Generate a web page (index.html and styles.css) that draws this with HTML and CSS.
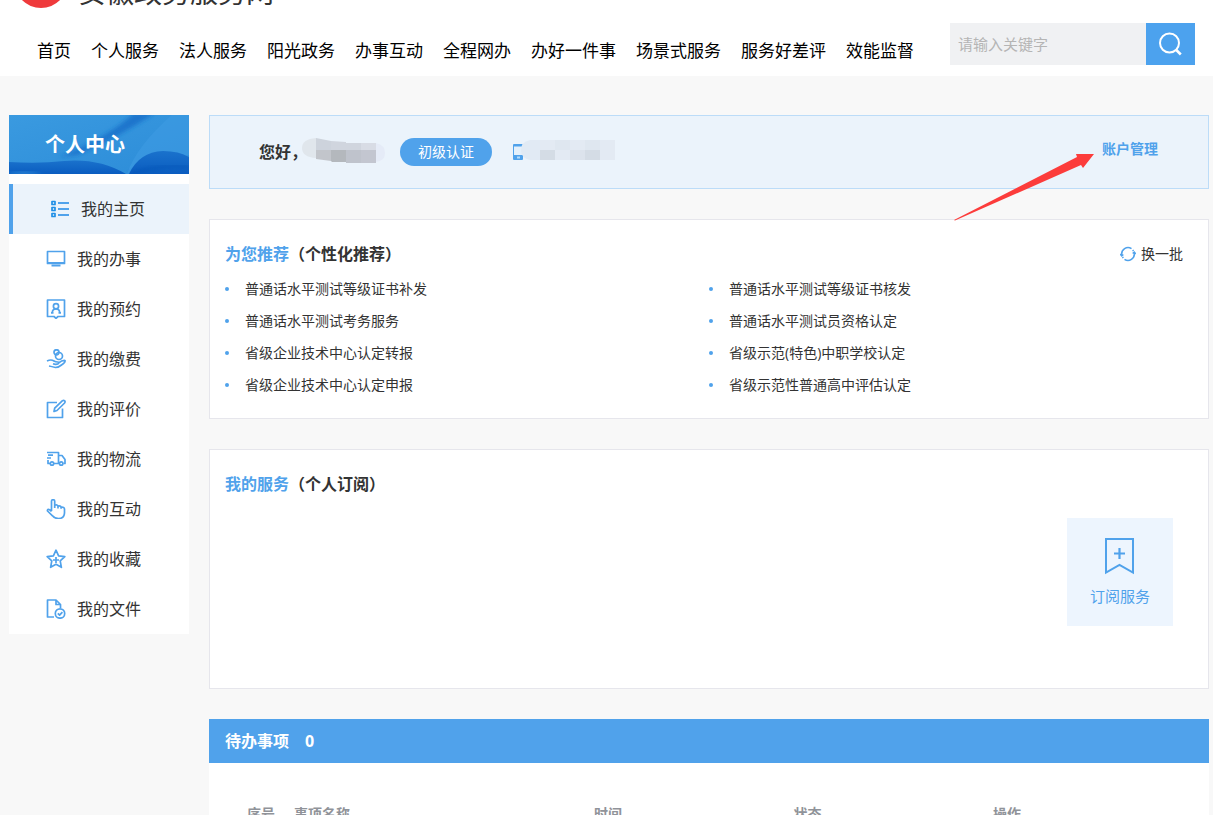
FILE: index.html
```html
<!DOCTYPE html>
<html lang="zh-CN">
<head>
<meta charset="utf-8">
<meta name="viewport" content="width=device-width, initial-scale=1">
<title>个人中心</title>
<link rel="stylesheet" href="styles.css">
</head>
<body>
<header class="header">
  <div class="brand">
    <span class="brand-emblem"></span>
    <span class="brand-name">安徽政务服务网</span>
  </div>
  <div class="header-row">
    <nav class="nav">
      <a href="#">首页</a>
      <a href="#">个人服务</a>
      <a href="#">法人服务</a>
      <a href="#">阳光政务</a>
      <a href="#">办事互动</a>
      <a href="#">全程网办</a>
      <a href="#">办好一件事</a>
      <a href="#">场景式服务</a>
      <a href="#">服务好差评</a>
      <a href="#">效能监督</a>
    </nav>
    <form class="search">
      <input class="search-input" type="text" placeholder="请输入关键字" aria-label="请输入关键字">
      <button class="search-button" type="button" aria-label="搜索">
        <svg width="24" height="24" viewBox="0 0 24 24" fill="none" stroke="#fff" stroke-width="2"><circle cx="10.500" cy="11" r="9.500"/><path d="M16.800 17.500l5 5" stroke-width="2.600"/></svg>
      </button>
    </form>
  </div>
</header>

<div class="layout">
  <aside class="sidebar">
    <div class="banner">
      <svg class="banner-art" viewBox="0 0 180 59" preserveAspectRatio="none" aria-hidden="true">
        <defs>
          <linearGradient id="sky" x1="0" y1="0" x2="1" y2="1"><stop offset="0" stop-color="#3a9ae0"/><stop offset="1" stop-color="#2c8cd8"/></linearGradient>
          <linearGradient id="deep" x1="0" y1="0" x2="0" y2="1"><stop offset="0" stop-color="#1a72cc"/><stop offset="1" stop-color="#0a5cc0"/></linearGradient>
          <filter id="soft"><feGaussianBlur stdDeviation="2"/></filter>
        </defs>
        <rect width="180" height="59" fill="url(#sky)"/>
        <path d="M50 42Q100 22 125 -2H146Q110 22 68 40Z" fill="#1a74cc" filter="url(#soft)"/>
        <path d="M118 59Q128 30 165 -2H180V40Z" fill="#3d9be2" opacity=".6"/>
        <path d="M0 47Q30 49 55 46Q90 43 117 59H0Z" fill="url(#deep)"/>
        <path d="M-4 60Q14 54 34 60Z" fill="#3391dc" filter="url(#soft)"/>
        <path d="M120 59Q130 37 154 36Q170 36 180 42V59Z" fill="url(#deep)"/>
        <path d="M122 59Q150 49 180 52" fill="none" stroke="#0b52b5" stroke-width="2" filter="url(#soft)"/>
      </svg>
      <h1 class="banner-title">个人中心</h1>
    </div>
    <nav class="menu">
      <a class="menu-item menu-item-active" href="#">
        <svg class="menu-icon" viewBox="0 0 20 20"><path d="M2 2.500h3v3H2zM2 8.500h3v3H2zM2 14.500h3v3H2z" stroke="#1f8fe6"/><path d="M8 4h11M8 10h11M8 16h11" stroke-width="2"/></svg>
        我的主页</a>
      <a class="menu-item" href="#">
        <svg class="menu-icon" viewBox="0 0 20 20"><path d="M1.500 2.500h17v12h-17z"/><path d="M1.500 14h17M5.500 16.500h9" stroke-width="2"/></svg>
        我的办事</a>
      <a class="menu-item" href="#">
        <svg class="menu-icon" viewBox="0 0 20 20"><path d="M1.500 1h17v16.500H12l-2 1.800-2-1.800H1.500z"/><circle cx="10" cy="7.200" r="2.600"/><path d="M6.200 14q.2-4.200 3.800-4.200t3.800 4.200M5 13.800h2.500M12.500 13.800H15"/></svg>
        我的预约</a>
      <a class="menu-item" href="#">
        <svg class="menu-icon" viewBox="0 0 20 20"><circle cx="10.500" cy="3.300" r="2.500"/><circle cx="13" cy="7" r="3.500"/><path d="M1 12q4-2 7 0 1.500 1 4 1 1.500 1.500-1 2.200-2 .4-4-.4M12.500 14q4-3 6.500-2.500.5 2-3.500 4.500-3 2.500-6 2.500-4-1-6.500-1.500"/></svg>
        我的缴费</a>
      <a class="menu-item" href="#">
        <svg class="menu-icon" viewBox="0 0 20 20"><path d="M11 3.500H1.500v15h15V9.500"/><path d="M8 12.500l.7-3.300 7.800-7.500q1.200-.8 2.200.2.800 1-.1 2.100L11 11.500z"/></svg>
        我的评价</a>
      <a class="menu-item" href="#">
        <svg class="menu-icon" viewBox="0 0 20 20"><path d="M1 3.500h11.500v11M2 6.200h5M1 9h4M2 11v3.500h2M8 14.500h5M12.500 6.500h3.500l3 4v4h-1.500"/><circle cx="6" cy="14.500" r="1.700"/><circle cx="15.200" cy="14.500" r="1.700"/></svg>
        我的物流</a>
      <a class="menu-item" href="#">
        <svg class="menu-icon" viewBox="0 0 20 20"><path d="M5.500 12V2.200q0-1.500 1.600-1.500t1.600 1.500V9M8.700 6.200q2.800-1 3.300 1V9.500M12 7q2.700-.6 3.100 1.200v1.600M15.100 8.200q3.300-.4 3.400 1.800v4q-.3 5.500-6 5.500-4 0-6-2.700L1.500 12q-.4-1.500 1-1.700 1.300 0 3 2.200"/></svg>
        我的互动</a>
      <a class="menu-item" href="#">
        <svg class="menu-icon" viewBox="0 0 20 20"><path d="M10 1.200l2.600 5.600 6.200.8-4.600 4.300 1.200 6.400L10 15.300l-5.400 3 1.200-6.400L1.200 7.600l6.200-.8zM10 8v6M7 11h6"/></svg>
        我的收藏</a>
      <a class="menu-item" href="#">
        <svg class="menu-icon" viewBox="0 0 20 20"><path d="M8 18H1.500V1H10l4.500 4.500V9M10 1v4.500h4.500"/><circle cx="14" cy="14.500" r="4.700"/><path d="M11.800 14.300l1.800 1.800 2.800-3"/></svg>
        我的文件</a>
    </nav>
  </aside>

  <main class="content">
    <section class="user-card">
      <strong class="greeting">您好，</strong>
      <svg class="name-mask" width="83" height="28" viewBox="0 0 83 28" aria-hidden="true">
        <path d="M14 0Q0 1 0 10Q0 19 14 20z" fill="#e0e6ec"/>
        <path d="M14 0l15 3v9H14z" fill="#cdd3dc"/><path d="M29 3l15 1v8H29zM44 5h15v7H44z" fill="#d0d5de"/><path d="M59 5h15v7H59z" fill="#d8dce5"/>
        <path d="M14 12h15v11l-15-2z" fill="#c2c5cb"/><path d="M29 12h15v12H30l-1-1z" fill="#b4b8bd"/><path d="M44 12h15v13H44z" fill="#bfc3cc"/><path d="M59 12h15v13H59z" fill="#c3c6d0"/>
        <path d="M74 5q9 2 9 10t-9 9z" fill="#e5ebf7"/>
      </svg>
      <button class="level" type="button">初级认证</button>
      <svg class="phone" width="102" height="24" viewBox="0 0 102 24" aria-hidden="true">
        <rect x="0" y="4" width="10" height="16" rx="1" fill="#50a2eb"/><path d="M1 6.500h9V15H1z" fill="#e4f0fb"/><path d="M4 16.500h3v2H4z" fill="#b5dbfa"/>
        <path d="M17 0Q8 2 8 10t9 10h10V0z" fill="#e1eaf4"/>
        <path d="M27 0h75v20H27z" fill="#e3eaf3"/><path d="M27 10h15v10H27zM72 10h15v10H72z" fill="#d4dce5"/><path d="M57 10h15v10H57z" fill="#dce3ec"/><path d="M42 0h15v10H42zM72 0h15v10H72z" fill="#dfe7f0"/>
      </svg>
      <a class="account" href="#">账户管理</a>
      <svg class="pointer" width="141" height="68" viewBox="0 0 141 68" aria-hidden="true"><path d="M141 0L123 0l1 3L1 66l1 .5L128 11l2 3z" fill="#fc3c3b"/></svg>
    </section>

    <section class="card">
      <div class="card-head">
        <h2 class="card-title"><span class="accent">为您推荐</span>（个性化推荐）</h2>
        <button class="refresh" type="button">
          <svg width="16" height="16" viewBox="0 0 16 16" fill="none" stroke="#50a2eb" stroke-width="1.600"><path d="M1.800 9A6.300 6.300 0 0 1 11.500 2.700M4.500 13.300A6.300 6.300 0 0 0 14.200 7M2.500 11l.8 1M12.700 4l.8 1"/><path d="M.3 8l1.500 1.800L3.300 8.500M15.700 8L14.200 6.200 12.700 7.500"/></svg>
          换一批</button>
      </div>
      <ul class="links">
        <li><a href="#">普通话水平测试等级证书补发</a></li>
        <li><a href="#">普通话水平测试等级证书核发</a></li>
        <li><a href="#">普通话水平测试考务服务</a></li>
        <li><a href="#">普通话水平测试员资格认定</a></li>
        <li><a href="#">省级企业技术中心认定转报</a></li>
        <li><a href="#">省级示范(特色)中职学校认定</a></li>
        <li><a href="#">省级企业技术中心认定申报</a></li>
        <li><a href="#">省级示范性普通高中评估认定</a></li>
      </ul>
    </section>

    <section class="card card-services">
      <div class="card-head">
        <h2 class="card-title"><span class="accent">我的服务</span>（个人订阅）</h2>
      </div>
      <button class="subscribe" type="button">
        <svg width="30" height="38" viewBox="0 0 30 38" fill="none" stroke="#50a2eb" stroke-width="2"><path d="M1 2h27v33.500L14.500 28 1 35.500z"/><path d="M14.500 11v11M9 16.500h11" stroke-width="2.200"/></svg>
        订阅服务</button>
    </section>

    <section class="todo">
      <h2 class="todo-title">待办事项<span>0</span></h2>
      <table class="todo-table">
        <colgroup><col class="col-no"><col class="col-name"><col class="col-time"><col class="col-state"><col class="col-action"></colgroup>
        <thead><tr><th>序号</th><th>事项名称</th><th>时间</th><th>状态</th><th>操作</th></tr></thead>
      </table>
    </section>
  </main>
</div>
</body>
</html>
```
FILE: styles.css
```css
* { box-sizing: border-box; }
html, body { height: 100%; }
body {
  margin: 0;
  overflow: hidden;
  background: #f8f8f8;
  color: #333;
  font: 14px/20px "Open Sans", "Noto Sans CJK SC", sans-serif;
}
a { color: inherit; text-decoration: none; }
h1, h2, ul { margin: 0; padding: 0; }
button, input { font: inherit; border: 0; border-radius: 0; padding: 0; }
button { cursor: pointer; }
svg { flex: none; }

.header { background: #fff; padding: 0 18px 11px; }
.brand {
  display: flex;
  align-items: flex-end;
  gap: 10px;
  height: 8px;
}
.brand-emblem { width: 54px; height: 54px; margin-left: -4px; border-radius: 50%; background: #ef3a3c; }
.brand-name { padding-bottom: 2px; font-size: 28px; line-height: 28px; white-space: nowrap; }
.header-row {
  display: flex;
  align-items: flex-start;
  justify-content: space-between;
  padding-top: 15px;
}
.nav {
  display: flex;
  gap: 20px;
  padding: 16px 0 0 19px;
  color: #000;
  font-size: 17px;
  line-height: 24px;
  white-space: nowrap;
}
.search { display: flex; width: 245px; height: 42px; }
.search-input { flex: 1; min-width: 0; padding: 0 8px; background: #f0f1f3; font-size: 15px; }
.search-input::placeholder { color: #b5b5b5; opacity: 1; }
.search-button { display: grid; place-items: center; width: 49px; background: #4ca2ee; }

.layout { display: flex; align-items: flex-start; gap: 20px; padding: 39px 4px 0 9px; }
.sidebar { flex: none; width: 180px; background: #fff; }
.banner { position: relative; height: 59px; padding: 0 36px; overflow: hidden; }
.banner-art { position: absolute; inset: 0; width: 100%; height: 100%; }
.banner-title { position: relative; color: #fff; font-size: 20px; line-height: 60px; }
.menu { padding-top: 10px; }
.menu-item {
  display: flex;
  align-items: center;
  gap: 11px;
  height: 50px;
  padding-left: 37px;
  font-size: 16px;
}
.menu-item-active { border-left: 4px solid #50a2eb; background: #ebf3fb; }
.menu-icon { width: 20px; height: 20px; fill: none; stroke: #50a2eb; stroke-width: 1.7; stroke-linejoin: round; }

.content { flex: 1; min-width: 0; display: grid; gap: 30px; }
.user-card {
  position: relative;
  display: flex;
  align-items: center;
  height: 74px;
  padding: 0 50px 0 49px;
  border: 1px solid #bcdcf8;
  background: #ebf3fb;
}
.greeting { font-size: 16px; }
.name-mask { margin: 0 15px 0 -5px; }
.level {
  height: 28px;
  padding: 0 18px;
  border-radius: 14px;
  background: #50a2eb;
  color: #fff;
}
.phone { margin-left: 21px; }
.account { margin-left: auto; padding-bottom: 6px; color: #50a2eb; font-weight: 700; }
.pointer { position: absolute; top: 38px; right: 114px; pointer-events: none; }

.card { padding: 17px 15px; border: 1px solid #e6e6ec; background: #fff; }
.card-head { display: flex; justify-content: space-between; align-items: flex-start; height: 36px; line-height: 34px; }
.card-title { font-size: 16px; }
.accent { color: #50a2eb; }
.refresh {
  display: flex;
  align-items: center;
  gap: 5px;
  margin-right: 10px;
  background: none;
  color: #333;
}
.links { display: grid; grid-template-columns: 1fr 1fr; list-style: none; line-height: 32px; }
.links li { display: flex; align-items: center; gap: 16px; }
.links li::before { content: ""; width: 4px; height: 4px; border-radius: 50%; background: #50a2eb; }
.card-services { min-height: 240px; }
.subscribe {
  display: flex;
  flex-direction: column;
  align-items: center;
  gap: 11px;
  width: 106px;
  height: 108px;
  margin: 15px 20px 0 auto;
  padding-top: 19px;
  background: #edf5fe;
  color: #50a2eb;
  font-size: 15px;
}

.todo { background: #fff; }
.todo-title {
  display: flex;
  gap: 16px;
  padding: 0 16px;
  background: #50a2eb;
  color: #fff;
  font-size: 16px;
  line-height: 44px;
}
.todo-table { width: 100%; padding: 0 16px; margin-top: 31px; border-collapse: separate; border-spacing: 0; table-layout: fixed; }
.todo-table th { padding: 0; height: 40px; color: #909399; text-align: left; }
.todo-table th:first-child { padding-left: 22px; }
.col-no { width: 69px; }
.col-name { width: 31%; }
.col-time, .col-state { width: 20.6%; }
```
